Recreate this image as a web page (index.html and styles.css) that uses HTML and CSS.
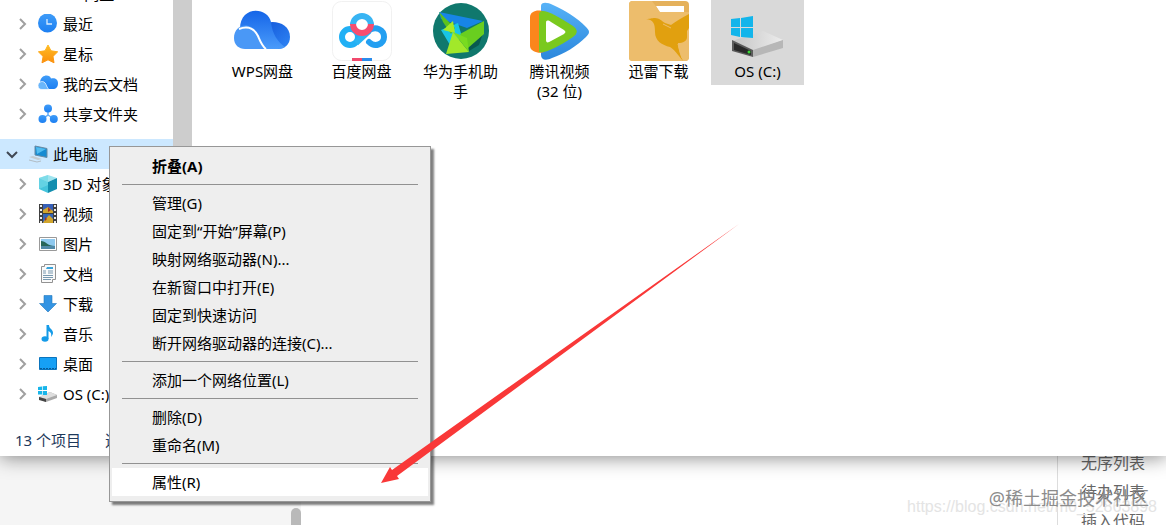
FILE: index.html
```
<!DOCTYPE html>
<html lang="zh-CN">
<head>
  <meta charset="UTF-8" />
  <meta name="viewport" content="width=device-width, initial-scale=1.0"/>
  <title>此电脑</title>
  <link rel="stylesheet" href="styles.css">
</head>
<body>
  <svg class="defs" width="0" height="0" aria-hidden="true">
    <defs>
      <linearGradient id="blue" x1="0" y1="0" x2="0" y2="1"><stop offset="0" stop-color="#3f9cf8"/><stop offset="1" stop-color="#1c7ff2"/></linearGradient>
      <linearGradient id="star" x1="0" y1="0" x2="0" y2="1"><stop offset="0" stop-color="#ffbd24"/><stop offset="1" stop-color="#fb8f0c"/></linearGradient>
      <linearGradient id="wps1" x1="0" y1="0" x2="0" y2="1"><stop offset="0" stop-color="#1565e8"/><stop offset="1" stop-color="#4a9bfa"/></linearGradient>
      <linearGradient id="wps2" x1="0" y1="0" x2="1" y2="1"><stop offset="0" stop-color="#1255d8"/><stop offset="1" stop-color="#2f86f5"/></linearGradient>
      <linearGradient id="tv" x1="0" y1="0" x2="0" y2="1"><stop offset="0" stop-color="#57b2f7"/><stop offset="1" stop-color="#2b87dc"/></linearGradient>
      <linearGradient id="drive" x1="0" y1="0" x2="1" y2="0"><stop offset="0" stop-color="#c4c4c4"/><stop offset="1" stop-color="#ececec"/></linearGradient>
      <symbol id="right" viewBox="0 0 12 12"><path d="M4 1l5 5-5 5" fill="none" stroke="#a0a0a0" stroke-width="2"/></symbol>
      <symbol id="down" viewBox="0 0 12 12"><path d="M1 4l5 5 5-5" fill="none" stroke="#404854" stroke-width="2"/></symbol>
    </defs>
  </svg>

  <main class="explorer">
    <div class="explorer-body">
      <nav class="sidebar">
        <div class="tree">
          <a href="#" class="row root"><svg class="chevron"><use href="#down"/></svg><svg class="icon"></svg>WPS网盘</a>
          <a href="#" class="row">
            <svg class="chevron"><use href="#right"/></svg>
            <svg class="icon" viewBox="0 0 20 20"><circle cx="9.5" cy="9" r="9.5" fill="url(#blue)"/><path d="M9 5v5h5" fill="none" stroke="#d9ecff" stroke-width="1.3"/></svg>
            最近</a>
          <a href="#" class="row">
            <svg class="chevron"><use href="#right"/></svg>
            <svg class="icon" viewBox="0 0 20 20"><path d="M10 1l3 5.800 6.700 1-4.700 4.600 1 6.400-6-3-6 3 1.100-6.400L.4 7.800l6.600-1z" fill="url(#star)" stroke="url(#star)" stroke-linejoin="round"/></svg>
            星标</a>
          <a href="#" class="row">
            <svg class="chevron"><use href="#right"/></svg>
            <svg class="icon" viewBox="0 0 20 20"><path d="M2 8C3 0 12 0 13 4.500c4-1 7 1 7 4.500C20 13 18 15 15 15H9z" fill="url(#blue)"/><path d="M0 11.500c0-4 6-6 8-1 1 2 1 3 3 5H4c-2 0-4-1-4-4z" fill="#6ab6fb" stroke="#fff" stroke-width=".7"/></svg>
            我的云文档</a>
          <a href="#" class="row">
            <svg class="chevron"><use href="#right"/></svg>
            <svg class="icon" viewBox="0 0 20 20"><path d="M10 5v6l-6 4m6-4l6 4" stroke="#65aef8" stroke-width="1.500" fill="none"/><g fill="url(#blue)"><circle cx="10" cy="4.500" r="4"/><circle cx="4.500" cy="15" r="4"/><circle cx="15.800" cy="15" r="4"/></g></svg>
            共享文件夹</a>
        </div>
        <div class="tree">
          <a href="#" class="row root selected">
            <svg class="chevron"><use href="#down"/></svg>
            <svg class="icon" viewBox="0 0 20 20"><path d="M7 2l12 2.500v9L7 11z" fill="#168bd2" stroke="#6b8ba3"/><path d="M8 3l10 2-9 5z" fill="#53bdf0"/><path d="M5 12l9 3-4 1-9-3z" fill="#c3cbd0"/><path d="M1 16l8 2 4-1" fill="none" stroke="#b1bcc4"/></svg>
            此电脑</a>
          <a href="#" class="row">
            <svg class="chevron"><use href="#right"/></svg>
            <svg class="icon" viewBox="0 0 20 20"><path d="M1 4l9-3 9 3-9 4z" fill="#9ee4ef"/><path d="M1 4l9 4v11l-9-4z" fill="#45c4dc"/><path d="M10 8l9-4v11l-9 4z" fill="#138eaf"/><path d="M1 4l9-3v10l-9 4z" fill="#70d8e7" opacity=".7"/></svg>
            3D 对象</a>
          <a href="#" class="row">
            <svg class="chevron"><use href="#right"/></svg>
            <svg class="icon" viewBox="0 0 20 20"><path d="M1 0h18v19H1z" fill="#404040"/><path d="M5 0h10v9H5z" fill="#365fb7"/><path d="M5 10h10v9H5z" fill="#3565b7"/><path d="M5 6l5-3 5 4v2H5zM6 17l5-6 4 4v4H5z" fill="#d1a52d"/><path d="M10 3l3 3-3 2zM7 13l2 2-2 2z" fill="#a33326"/><path d="M3 1v18M17 1v18" stroke="#eee" stroke-width="2" stroke-dasharray="2 2"/></svg>
            视频</a>
          <a href="#" class="row">
            <svg class="chevron"><use href="#right"/></svg>
            <svg class="icon" viewBox="0 0 20 20"><path d="M1.500 3.500h17v13h-17z" fill="#fff" stroke="#999"/><path d="M3 5h14v10H3z" fill="#8fc9ef"/><path d="M3 7c5 0 6 5 14 5v3H3z" fill="#28665a"/><path d="M3 12h14v3H3z" fill="#5189a8"/></svg>
            图片</a>
          <a href="#" class="row">
            <svg class="chevron"><use href="#right"/></svg>
            <svg class="icon" viewBox="0 0 20 20"><path d="M3.500 2.500h3v-2h11v15h-3v3h-11z" fill="#fafafa" stroke="#929292"/><path d="M5 7h3M5 9h3M5 11.500h10M5 13.500h10M5 15.500h8M10 9h5M10 7h5" stroke="#7899b0"/><path d="M9 3h6v2H8z" fill="#3aa4da"/></svg>
            文档</a>
          <a href="#" class="row">
            <svg class="chevron"><use href="#right"/></svg>
            <svg class="icon" viewBox="0 0 20 20"><path d="M6 1.500h8v8h4.500L10 18 1.500 9.500H6z" fill="#3394e3" stroke="#2478bd" stroke-width=".6"/></svg>
            下载</a>
          <a href="#" class="row">
            <svg class="chevron"><use href="#right"/></svg>
            <svg class="icon" viewBox="0 0 20 20"><ellipse cx="7" cy="15" rx="3.500" ry="2.800" fill="#159be8"/><path d="M8.500 1H11c0 4 4 4 4 8 0 1-1 3-2 4 1-4-1-5-2.500-6v8h-2z" fill="#159be8"/></svg>
            音乐</a>
          <a href="#" class="row">
            <svg class="chevron"><use href="#right"/></svg>
            <svg class="icon" viewBox="0 0 20 20"><path d="M1.500 3.500h17v12h-17z" fill="#16a0f5" stroke="#0b74bd"/><path d="M2 14.500h16" stroke="#075b99" stroke-dasharray="2 1"/></svg>
            桌面</a>
          <a href="#" class="row">
            <svg class="chevron"><use href="#right"/></svg>
            <svg class="icon" viewBox="0 0 20 20"><path d="M1 13l11-5 7 3v3l-11 4-7-3z" fill="#a9a9a9"/><path d="M1 13l11-5 7 3-11 4z" fill="#dedede"/><path d="M1 13l7 2v3l-7-2z" fill="#444"/><path d="M0 3l4-.5V6H0zM4.700 2.300L9 2v4H4.700zM0 7h4v3.500H0zM4.700 7H9v4H4.700z" fill="#18b5ea"/></svg>
            OS (C:)</a>
        </div>
      </nav>
      <div class="scrollbar"></div>
      <section class="files">
        <a href="#" class="file">
          <svg class="file-icon" viewBox="0 0 60 60"><path d="M27 26c8-9 30-6 30 10 0 8-6 12-12 12H30z" fill="url(#wps2)"/><path d="M7 28C7 4 35 6 38 21c1 12 7 20 14 25-3 2-7 2-11 2H28z" fill="url(#wps1)"/><path d="M1 37c0-15 18-17 23-4 2 6 4 12 7 15H12C6 48 1 44 1 37z" fill="#4a98f6"/><path d="M6 28c8-3 15-1 19 7 3 7 4 10 8 13" fill="none" stroke="#fff" stroke-width="2"/></svg>
          WPS网盘</a>
        <a href="#" class="file">
          <svg class="file-icon" viewBox="0 0 60 60"><rect x=".5" y=".5" width="59" height="59" rx="9" fill="#fff" stroke="#f1f1f1"/><g fill="none" stroke-width="6"><circle cx="18" cy="36" r="8" stroke="#21b0f5"/><path d="M24 42l13-12" stroke="#2bb4f3"/><path d="M36 30c8-6 16-1 16 6 0 7-9 11-15 5" stroke="#239ff1" stroke-linecap="round"/><path d="M21 24a9 9 0 1 1 18 0" stroke="#38b4f3"/><path d="M21 23a9 9 0 0 0 18 0" stroke="#f64d6f"/></g><path d="M20 57h10v3H20z" fill="#f1496d"/><path d="M30 57h10v3H30z" fill="#2a8cec"/></svg>
          百度网盘</a>
        <a href="#" class="file">
          <svg class="file-icon" viewBox="0 0 60 60"><circle cx="30" cy="30" r="28" fill="#10786d"/><path d="M36 46l16-14-4 12-10 6z" fill="#07594f"/><path d="M8 11l44 9-16 7-26-9z" fill="#1785e6"/><path d="M10 29l17-7 4 14-12 8z" fill="#18c5e5"/><path d="M8 11l16 16-4 6-8-12z" fill="#5cc11d"/><path d="M12 29l10-9 2 12z" fill="#a6ea26"/><path d="M53 20v13L37 47l-8-14z" fill="#69ce1f"/><path d="M22 31l16 20-23 2z" fill="#a2e82a"/><path d="M22 31l16 20-2-14z" fill="#79db20"/></svg>
          华为手机助手</a>
        <a href="#" class="file">
          <svg class="file-icon" viewBox="0 0 60 60"><path d="M11 5c0-4 6-4 12-1 11 5 25 13 33 22 4 4 4 6 0 10-9 9-22 17-34 21-6 3-11 2-11-3z" fill="url(#tv)"/><path d="M0 16c0-6 9-8 14-5v40c-4 2-14 0-14-6z" fill="#fb861c"/><path d="M9 13c1-7 14-1 34 12 5 4 5 7 0 11-15 10-29 17-34 15z" fill="#7ac91e"/><path d="M16 22c0-3 2-3 5-1l13 8c2 2 2 2 0 4l-13 7c-3 2-5 2-5-1z" fill="#fff"/></svg>
          腾讯视频 (32 位)</a>
        <a href="#" class="file">
          <svg class="file-icon" viewBox="0 0 60 60"><rect width="60" height="60" rx="4" fill="#e5b15b"/><path d="M27 5h28v8H34c-3 0-5-5-7-8z" fill="#fff"/><path d="M0 4c0-3 1-4 4-4h19l8 11h29v45c0 3-2 4-4 4H4c-3 0-4-1-4-4z" fill="#edbd6c"/><path d="M17 18c5 0 5-1 9-1 4 0 7 3 10 5l6 2c5-4 11-7 18-11v14l-2 3v6c0 4-4 6-9 6 0 6 2 12 5 18-5-6-9-12-13-14-8-2-15-6-15-15 0-8-1-12-9-13z" fill="#e1a00f"/><path d="M49 43l4 14M34 23l8 4" stroke="#edbd6c" fill="none"/></svg>
          迅雷下载</a>
        <a href="#" class="file current">
          <svg class="file-icon" viewBox="0 0 60 60"><path d="M4 40l31-10 20 9-28 11z" fill="url(#drive)"/><path d="M25 49l30-10v8L25 56z" fill="#b7b7b7"/><path d="M4 39l21 10v7L4 50z" fill="#5b5b5b"/><path d="M6 42l17 8v4L6 49z" fill="#292929"/><circle cx="21" cy="51" r="1.500" fill="#39d936"/><path d="M3 18l9-1v9H3zM13 17l12-2v11H13zM3 27h9v9l-9-2zM13 27h12v10l-12-1z" fill="#12b5eb"/></svg>
          OS (C:)</a>
      </section>
    </div>
    <footer class="status"><span>13 个项目</span><span>选中 1 个项目</span></footer>
  </main>

  <div class="editor">
    <div class="editor-source"><div class="thumb"></div></div>
    <div class="editor-preview"></div>
    <ul class="editor-help">
      <li>无序列表</li>
      <li>待办列表</li>
      <li>插入代码</li>
    </ul>
  </div>

  <div class="menu" role="menu">
    <button class="default">折叠(A)</button>
    <hr>
    <button>管理(G)</button>
    <button>固定到“开始”屏幕(P)</button>
    <button>映射网络驱动器(N)...</button>
    <button>在新窗口中打开(E)</button>
    <button>固定到快速访问</button>
    <button>断开网络驱动器的连接(C)...</button>
    <hr>
    <button>添加一个网络位置(L)</button>
    <hr>
    <button>删除(D)</button>
    <button>重命名(M)</button>
    <hr>
    <button class="active">属性(R)</button>
  </div>

  <svg class="arrow" viewBox="0 0 360 260" aria-hidden="true"><path d="M359 0L12 246l-2-3-9 16 18-4-2-3z" fill="#f93838"/></svg>

  <div class="watermark url">https://blog.csdn.net/m0_52863898</div>
  <div class="watermark site">@稀土掘金技术社区</div>
</body>
</html>
```

FILE: styles.css
```
* {
  box-sizing: border-box;
}

body {
  margin: 0;
  position: relative;
  min-height: 100vh;
  display: flex;
  flex-direction: column;
  overflow: hidden;
  background: #fff;
  color: #000;
  font: 15px/20px "Noto Sans", "Noto Sans CJK SC", sans-serif;
}

a {
  color: inherit;
  text-decoration: none;
}

.defs {
  position: absolute;
}

/* explorer window */
.explorer {
  position: relative;
  z-index: 1;
  background: #fff;
  box-shadow: 0 2px 18px rgba(0, 0, 0, 0.45);
}

.explorer-body {
  display: flex;
  overflow: hidden;
}

.sidebar {
  width: 173px;
  flex: none;
  margin-top: -21px;
  padding-bottom: 16px;
}

.tree + .tree {
  margin-top: 10px;
}

.row {
  display: flex;
  align-items: center;
  height: 30px;
  padding-left: 16px;
  white-space: nowrap;
  overflow: hidden;
}

.row.root {
  padding-left: 6px;
}

.row.selected {
  background: #cce8ff;
}

.chevron {
  width: 12px;
  height: 12px;
  margin-right: 10px;
  flex: none;
}

.icon {
  width: 20px;
  height: 20px;
  margin-right: 5px;
  flex: none;
}

.scrollbar {
  width: 19px;
  flex: none;
  background: #cdcdcd;
}

.files {
  flex: 1;
  display: flex;
  align-items: flex-start;
  gap: 6px;
  padding-left: 24px;
}

.file {
  width: 93px;
  padding: 1px 8px 4px;
  text-align: center;
}

.file.current {
  background: #d9d9d9;
}

.file-icon {
  display: block;
  width: 60px;
  height: 60px;
  margin: 0 auto;
}

.status {
  display: flex;
  gap: 24px;
  height: 31px;
  padding: 5px 15px;
  color: #1e395b;
}

/* page behind the window */
.editor {
  flex: 1;
  display: flex;
  height: 76px;
  margin-top: -7px;
}

.editor-source {
  width: 301px;
  background: #f5f5f5;
  display: flex;
  justify-content: flex-end;
  padding-top: 59px;
}

.thumb {
  width: 10px;
  border-radius: 5px 5px 0 0;
  background: #b9b9b9;
}

.editor-preview {
  flex: 1;
}

.editor-help {
  width: 109px;
  height: 76px;
  margin: 0;
  padding: 0 0 0 23px;
  border-left: 1px solid #ddd;
  list-style: none;
  overflow: hidden;
  color: #666;
  font-size: 16px;
  line-height: 29px;
}

/* context menu */
.menu {
  position: absolute;
  z-index: 2;
  left: 109px;
  top: 146px;
  width: 322px;
  padding: 5px 2px;
  background: #eee;
  border: 1px solid #979797;
  box-shadow: 3px 3px 2px rgba(0, 0, 0, 0.5);
}

.menu button {
  display: block;
  width: 100%;
  height: 28px;
  padding: 0 0 0 40px;
  border: none;
  background: none;
  color: #000;
  font: inherit;
  text-align: left;
}

.menu button.default {
  font-weight: bold;
}

.menu button.active,
.menu button:hover {
  background: #fff;
}

.menu hr {
  height: 1px;
  margin: 4px 10px;
  border: none;
  background: #919191;
}

.arrow {
  position: absolute;
  z-index: 3;
  left: 380px;
  top: 224px;
  width: 360px;
  height: 260px;
}

.watermark {
  position: absolute;
  z-index: 3;
  white-space: nowrap;
}

.watermark.url {
  right: 9px;
  bottom: 8px;
  color: #e4e4e4;
  font-family: "Liberation Sans", sans-serif;
  font-size: 16px;
}

.watermark.site {
  right: 17px;
  bottom: 17px;
  color: #8c8c8c;
  font-size: 18px;
}
```
